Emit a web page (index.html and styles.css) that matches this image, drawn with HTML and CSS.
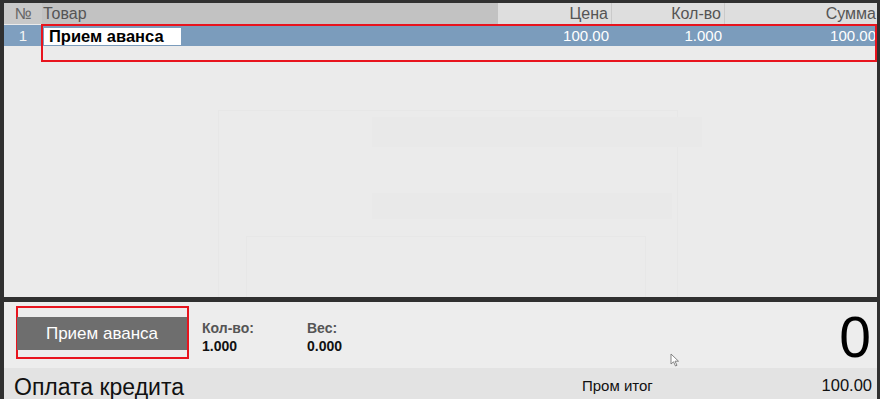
FILE: index.html
```html
<!DOCTYPE html>
<html lang="ru">
<head>
<meta charset="utf-8">
<link rel="stylesheet" href="styles.css">
</head>
<body>
<div class="screen">
  <div class="table">
    <div class="row head">
      <div class="c num">№</div>
      <div class="c name dark">Товар</div>
      <div class="c price r">Цена</div>
      <div class="c qty r">Кол-во</div>
      <div class="c sum r">Сумма</div>
    </div>
    <div class="row sel">
      <div class="c num n1">1</div>
      <div class="c name"><span class="edit">Прием аванса</span></div>
      <div class="c price r">100.00</div>
      <div class="c qty r">1.000</div>
      <div class="c sum r">100.00</div>
    </div>
    <div class="ghost g1"></div>
    <div class="ghost g2"></div>
    <div class="ghost g3"></div>
    <div class="ghost g4"></div>
    <div class="hl hl-row"></div>
  </div>
  <div class="bottom">
    <div class="info">
      <div class="btn-wrap"><button class="btn">Прием аванса</button></div>
      <div class="field f-qty"><span class="lbl">Кол-во:</span><span class="val">1.000</span></div>
      <div class="field f-w"><span class="lbl">Вес:</span><span class="val">0.000</span></div>
      <div class="big">0</div>
      <svg class="cursor" width="10" height="14" viewBox="0 0 10 14"><path d="M1 1 L1 11 L3.5 8.8 L5.5 13 L7 12.3 L5 8.2 L8.5 8.2 Z" fill="#fff" stroke="#777" stroke-width="0.9"/></svg>
    </div>
    <div class="total">
      <div class="op">Оплата кредита</div>
      <div class="pt">Пром итог</div>
      <div class="ptv">100.00</div>
    </div>
  </div>
</div>
</body>
</html>
```
FILE: styles.css
```css
* { box-sizing: border-box; }
html, body { margin: 0; padding: 0; }
body {
  width: 880px;
  height: 399px;
  overflow: hidden;
  font-family: "Liberation Sans", Arial, sans-serif;
  background: #303030;
}
.screen {
  width: 880px;
  height: 399px;
  display: flex;
  flex-direction: column;
  padding: 3px 3px 0 4px;
  gap: 5px;
  background: #303030;
}
.table {
  position: relative;
  height: 294px;
  background: #ebebeb;
  flex: none;
  overflow: hidden;
}
.row {
  display: flex;
  height: 21px;
  font-size: 15px;
}
.c {
  padding: 0 3px;
  line-height: 21px;
  white-space: nowrap;
}
.num { width: 38px; text-align: center; }
.name { width: 456px; }
.price { width: 114px; }
.qty { width: 113px; }
.sum { flex: 1; }
.r { text-align: right; }
.head { background: #dedede; color: #555; height: 21px; font-size: 16px; }
.head .num { background: #c9c9c9; color: #666; }
.head .dark { background: #c2c2c2; padding-left: 1px; }
.head .price, .head .qty { border-right: 1px solid #cacaca; }
.head .sum { padding-right: 1px; }
.sel {
  background: #7b9cbc;
  color: #fff;
  height: 21px;
  margin-top: 1px;
}
.sel .n1 { background: #7f9fbf; color: #f4f4f4; }
.sel .name { padding: 1px 0 0 2px; }
.edit {
  display: inline-block;
  background: #fff;
  color: #000;
  font-weight: bold;
  width: 137px;
  height: 17px;
  line-height: 17px;
  padding-left: 5px;
  font-size: 16.5px;
}
.sel .sum { padding-right: 1px; }
.hl {
  position: absolute;
  border: 2px solid #e8141e;
}
.hl-row { left: 37px; top: 21px; width: 836px; height: 38px; }
.ghost {
  position: absolute;
  border: 1px solid #e7e7e7;
}
.g1 { left: 214px; top: 107px; width: 460px; height: 200px; }
.g2 { left: 368px; top: 114px; width: 330px; height: 30px; background: #e9e9e9; border: none; }
.g3 { left: 368px; top: 190px; width: 300px; height: 26px; background: #e9e9e9; border: none; }
.g4 { left: 242px; top: 233px; width: 400px; height: 80px; }

.bottom {
  flex: 1;
  display: flex;
  flex-direction: column;
  background: #ededed;
}
.info {
  position: relative;
  height: 66px;
  display: flex;
  align-items: flex-start;
  flex: none;
}
.btn-wrap {
  margin: 4px 0 0 12px;
  width: 173px;
  height: 53px;
  border: 2px solid #e8141e;
  padding: 9px 0 0 0;
  flex: none;
}
.btn {
  display: block;
  margin-left: -1px;
  width: 170px;
  height: 33px;
  border: none;
  background: #6e6e6e;
  color: #fff;
  font-family: "Liberation Sans", Arial, sans-serif;
  font-size: 17px;
  padding: 0;
  padding-top: 1px;
}
.field {
  display: flex;
  flex-direction: column;
  font-size: 14px;
  font-weight: bold;
  margin-top: 17px;
  line-height: 18px;
}
.f-qty { margin-left: 13px; width: 105px; }
.f-w { width: 100px; }
.lbl { color: #555; }
.val { color: #111; }
.big {
  margin-left: auto;
  font-size: 57px;
  line-height: 57px;
  margin-top: 7px;
  margin-right: 6px;
  color: #000;
}
.cursor { position: absolute; left: 666px; top: 51px; }
.total {
  flex: 1;
  display: flex;
  align-items: flex-start;
  background: #e3e3e3;
}
.op {
  font-size: 23px;
  line-height: 27px;
  color: #111;
  margin-left: 10px;
  width: 568px;
  padding-top: 6px;
}
.pt { font-size: 15px; color: #111; padding-top: 9px; }
.ptv { margin-left: auto; margin-right: 5px; font-size: 16.5px; color: #111; padding-top: 8px; }
```
